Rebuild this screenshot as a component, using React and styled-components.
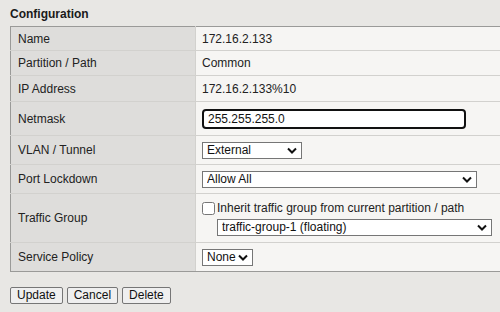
import React from "react";
import styled, { createGlobalStyle } from "styled-components";

const Global = createGlobalStyle`
  html, body { margin: 0; padding: 0; background: #e8e7e4; overflow: hidden; }
  body { font-family: "Liberation Sans", Arial, sans-serif; font-size: 12px; color: #222; }
`;

const chevron =
  "url(\"data:image/svg+xml;utf8,<svg xmlns='http://www.w3.org/2000/svg' width='10' height='7' viewBox='0 0 10 7'><path d='M1 1.5 L5 5.5 L9 1.5' fill='none' stroke='%23111' stroke-width='2'/></svg>\")";

const Page = styled.div`
  padding: 7px 0 0 10px;
  width: 490px;
`;

const Title = styled.div`
  font-weight: bold;
  font-size: 12px;
  line-height: 14px;
  height: 19px;
  color: #1a1a1a;
`;

const Table = styled.table`
  width: 490px;
  border-collapse: collapse;
  border-top: 1px solid #9a9a98;
  border-bottom: 1px solid #9a9a98;
  border-left: 1px solid #9a9a98;
`;

const Row = styled.tr`
  height: ${(p) => p.$h}px;
  & > td {
    border-bottom: ${(p) => (p.$last ? "1px solid #9a9a98" : "1px solid #d2d1ce")};
  }
`;

const Label = styled.td`
  width: 177px;
  padding: 0 0 0 7px;
  background: #dedddb;
  border-right: 1px solid #d2d1ce;
  vertical-align: middle;
  color: #222;
`;

const Value = styled.td`
  padding: 0 0 0 6px;
  background: #f6f5f3;
  vertical-align: middle;
  color: #222;
`;

const TextInput = styled.input`
  box-sizing: border-box;
  width: 264px;
  height: 20px;
  border: 2px solid #111;
  border-radius: 4px;
  padding: 0 4px;
  font: 12px "Liberation Sans", Arial, sans-serif;
  color: #111;
  background: #fff;
  outline: none;
  display: block;
`;

const Select = styled.select`
  appearance: none;
  -webkit-appearance: none;
  box-sizing: border-box;
  width: ${(p) => p.$w}px;
  height: 17px;
  border: 1px solid #767676;
  border-radius: 0;
  background: #fff ${chevron} no-repeat right 4px center / 10px 7px;
  font: 12px "Liberation Sans", Arial, sans-serif;
  line-height: 15px;
  color: #111;
  padding: 0 0 0 4px;
  display: block;
  margin-left: ${(p) => p.$ml || 0}px;
  outline: none;
`;

const CheckLine = styled.label`
  display: flex;
  align-items: center;
  gap: 2px;
  height: 16px;
  margin-bottom: 3px;
`;

const Check = styled.input`
  margin: 0;
  width: 13px;
  height: 13px;
`;

const Buttons = styled.div`
  display: flex;
  gap: 4px;
  margin-top: 15px;
`;

const Button = styled.button`
  box-sizing: border-box;
  height: 17px;
  padding: 0 6px;
  border: 1px solid #767676;
  border-radius: 2px;
  background: #efefef;
  font: 12px "Liberation Sans", Arial, sans-serif;
  color: #111;
  line-height: 15px;
`;

export default function App() {
  return (
    <>
      <Global />
      <Page>
        <Title>Configuration</Title>
        <Table>
          <tbody>
            <Row $h={24}>
              <Label>Name</Label>
              <Value>172.16.2.133</Value>
            </Row>
            <Row $h={25}>
              <Label>Partition / Path</Label>
              <Value>Common</Value>
            </Row>
            <Row $h={26}>
              <Label>IP Address</Label>
              <Value>172.16.2.133%10</Value>
            </Row>
            <Row $h={34}>
              <Label>Netmask</Label>
              <Value>
                <TextInput defaultValue="255.255.255.0" />
              </Value>
            </Row>
            <Row $h={29}>
              <Label>VLAN / Tunnel</Label>
              <Value>
                <Select $w={100} defaultValue="External">
                  <option>External</option>
                </Select>
              </Value>
            </Row>
            <Row $h={29}>
              <Label>Port Lockdown</Label>
              <Value>
                <Select $w={275} defaultValue="Allow All">
                  <option>Allow All</option>
                </Select>
              </Value>
            </Row>
            <Row $h={49}>
              <Label>Traffic Group</Label>
              <Value>
                <CheckLine>
                  <Check type="checkbox" />
                  Inherit traffic group from current partition / path
                </CheckLine>
                <Select $w={275} $ml={15} defaultValue="tg">
                  <option value="tg">traffic-group-1 (floating)</option>
                </Select>
              </Value>
            </Row>
            <Row $h={29} $last>
              <Label>Service Policy</Label>
              <Value>
                <Select $w={51} defaultValue="None">
                  <option>None</option>
                </Select>
              </Value>
            </Row>
          </tbody>
        </Table>
        <Buttons>
          <Button>Update</Button>
          <Button>Cancel</Button>
          <Button>Delete</Button>
        </Buttons>
      </Page>
    </>
  );
}
